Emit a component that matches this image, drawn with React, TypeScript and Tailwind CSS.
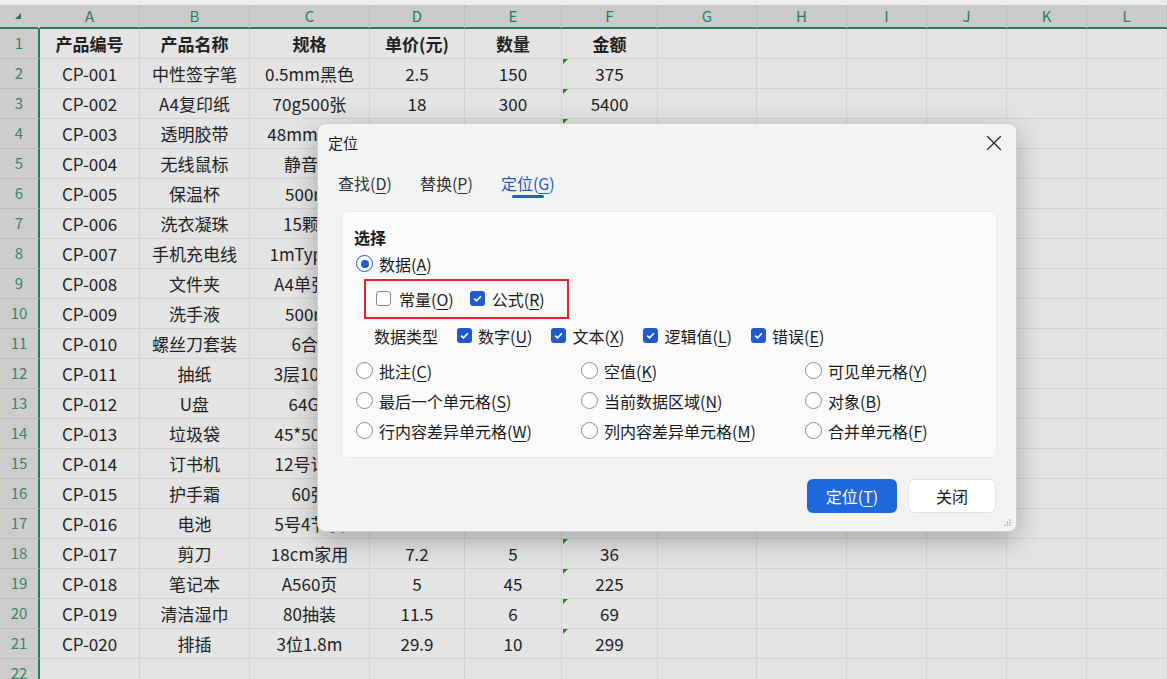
import { X } from "lucide-react";

const letters = ["A", "B", "C", "D", "E", "F", "G", "H", "I", "J", "K", "L"];

const rows = [
  ["产品编号", "产品名称", "规格", "单价(元)", "数量", "金额"],
  ["CP-001", "中性签字笔", "0.5mm黑色", "2.5", "150", "375"],
  ["CP-002", "A4复印纸", "70g500张", "18", "300", "5400"],
  ["CP-003", "透明胶带", "48mm透明", "3.5", "40", "140"],
  ["CP-004", "无线鼠标", "静音款", "59", "12", "708"],
  ["CP-005", "保温杯", "500ml", "45", "20", "900"],
  ["CP-006", "洗衣凝珠", "15颗装", "19.9", "30", "597"],
  ["CP-007", "手机充电线", "1mType-C", "15", "50", "750"],
  ["CP-008", "文件夹", "A4单张装", "6", "100", "600"],
  ["CP-009", "洗手液", "500ml", "12.8", "24", "307.2"],
  ["CP-010", "螺丝刀套装", "6合1", "35", "8", "280"],
  ["CP-011", "抽纸", "3层100抽", "2", "200", "400"],
  ["CP-012", "U盘", "64GB", "39", "15", "585"],
  ["CP-013", "垃圾袋", "45*50cm", "8.5", "60", "510"],
  ["CP-014", "订书机", "12号订针", "16", "10", "160"],
  ["CP-015", "护手霜", "60张", "22", "18", "396"],
  ["CP-016", "电池", "5号4节装", "9.9", "40", "396"],
  ["CP-017", "剪刀", "18cm家用", "7.2", "5", "36"],
  ["CP-018", "笔记本", "A560页", "5", "45", "225"],
  ["CP-019", "清洁湿巾", "80抽装", "11.5", "6", "69"],
  ["CP-020", "排插", "3位1.8m", "29.9", "10", "299"],
  ["", "", "", "", "", ""],
];

// "查找(D)" -> 查找( D underlined )
function Label({ text }: { text: string }) {
  const m = text.match(/^(.*)\((.)\)$/);
  if (!m) return <span>{text}</span>;
  return (
    <span>
      {m[1]}(<span className="underline underline-offset-[3px]">{m[2]}</span>)
    </span>
  );
}

function Check({ on }: { on: boolean }) {
  return on ? (
    <span className="flex size-[15px] items-center justify-center rounded-[3px] bg-[#1f5bcc]">
      <svg width="11" height="11" viewBox="0 0 11 11">
        <path d="M2.2 5.6 4.5 7.8 8.9 3.2" stroke="white" strokeWidth="1.6" fill="none" />
      </svg>
    </span>
  ) : (
    <span className="size-[15px] rounded-[3px] border border-[#8a8a8a] bg-white" />
  );
}

function Radio({ on }: { on?: boolean }) {
  return on ? (
    <span className="flex size-[17px] items-center justify-center rounded-full border-[1.5px] border-[#1f5bcc] bg-white">
      <span className="size-[8px] rounded-full bg-[#1f5bcc]" />
    </span>
  ) : (
    <span className="size-[17px] rounded-full border border-[#8c8c8c] bg-white" />
  );
}

const radios = [
  "批注(C)",
  "空值(K)",
  "可见单元格(Y)",
  "最后一个单元格(S)",
  "当前数据区域(N)",
  "对象(B)",
  "行内容差异单元格(W)",
  "列内容差异单元格(M)",
  "合并单元格(F)",
];

const types = ["数字(U)", "文本(X)", "逻辑值(L)", "错误(E)"];

function Dialog() {
  return (
    <div className="absolute left-[317px] top-[123px] flex h-[409px] w-[700px] flex-col rounded-lg border border-[#cfcfcf] bg-[#f3f3f3] text-[#1a1a1a] shadow-[0_8px_28px_rgba(0,0,0,0.28)]">
      <div className="flex h-[38px] items-center justify-between pl-[10px] pr-[9px]">
        <span className="text-[15px]">定位</span>
        <X size={26} strokeWidth={1.1} className="text-[#222]" />
      </div>

      <div className="flex items-start gap-[28px] pl-[20px] pt-[10px] text-[16px] leading-[22px]">
        <span className="text-[#333]">
          <Label text="查找(D)" />
        </span>
        <span className="text-[#333]">
          <Label text="替换(P)" />
        </span>
        <span className="flex flex-col items-center text-[#1f57c3]">
          <Label text="定位(G)" />
          <span className="mt-[1px] h-[2.5px] w-[32px] rounded-full bg-[#2a5cbd]" />
        </span>
      </div>

      <div className="ml-[23px] mt-[13px] flex h-[247px] w-[656px] flex-col rounded-md border border-[#ebebeb] bg-[#fafafa] pl-[12px] pt-[14px] text-[16px]">
        <div className="flex h-[22px] items-center font-bold">选择</div>
        <div className="ml-[2px] mt-[5px] flex h-[22px] items-center gap-[6px]">
          <Radio on />
          <Label text="数据(A)" />
        </div>
        <div className="ml-[10px] mt-[4px] flex h-[40px] w-[205px] items-center border-2 border-[#e3262b] pl-[10px]">
          <Check on={false} />
          <span className="ml-[8px]">
            <Label text="常量(O)" />
          </span>
          <span className="ml-[16px]">
            <Check on />
          </span>
          <span className="ml-[7px]">
            <Label text="公式(R)" />
          </span>
        </div>
        <div className="ml-[20px] mt-[6px] flex h-[22px] items-center">
          <span className="mr-[19px]">数据类型</span>
          {types.map((t) => (
            <span key={t} className="mr-[19px] flex items-center gap-[6px]">
              <Check on />
              <Label text={t} />
            </span>
          ))}
        </div>
        <div className="ml-[2px] mt-[9px] grid grid-cols-[225px_224px_auto]">
          {radios.map((r) => (
            <div key={r} className="flex h-[30px] items-center gap-[6px]">
              <Radio />
              <Label text={r} />
            </div>
          ))}
        </div>
      </div>

      <div className="mt-[21px] flex justify-end gap-[11px] pr-[20px] text-[16px]">
        <button className="flex h-[34px] w-[90px] items-center justify-center rounded-md bg-[#1f68de] text-white">
          <Label text="定位(T)" />
        </button>
        <button className="flex h-[34px] w-[88px] items-center justify-center rounded-md border border-[#e2e2e2] bg-white">
          关闭
        </button>
      </div>

      <svg className="absolute bottom-[5px] right-[5px]" width="8" height="8" viewBox="0 0 8 8">
        <circle cx="7" cy="2" r="0.8" fill="#999" />
        <circle cx="4.5" cy="4.5" r="0.8" fill="#999" />
        <circle cx="7" cy="4.5" r="0.8" fill="#999" />
        <circle cx="2" cy="7" r="0.8" fill="#999" />
        <circle cx="4.5" cy="7" r="0.8" fill="#999" />
        <circle cx="7" cy="7" r="0.8" fill="#999" />
      </svg>
    </div>
  );
}

export default function App() {
  const grid =
    "grid grid-cols-[40px_100px_110px_120px_95px_97px_96px_99px_90px_80px_80px_80px_80px]";
  return (
    <div className="relative h-[679px] w-[1167px] overflow-hidden bg-[#e4e4e4] font-['Noto_Sans_CJK_SC',sans-serif]">
      <div className="h-[5px] bg-[#ededed]" />
      {/* column header */}
      <div className={`${grid} h-[24px] border-b-2 border-[#2a7a5c] bg-[#cbcbcb]`}>
        <div className="relative border-r-2 border-[#cbcbcb]">
          <svg className="absolute left-[15px] top-[8px]" width="6" height="6" viewBox="0 0 6 6">
            <path d="M6 0V6H0Z" fill="#3f6f5c" />
          </svg>
        </div>
        {letters.map((l) => (
          <div
            key={l}
            className="flex items-center justify-center border-r border-[#bdbdbd] text-[15px] text-[#2e7a5e]"
          >
            {l}
          </div>
        ))}
      </div>

      {rows.map((r, i) => (
        <div key={i} className={`${grid} h-[30px]`}>
          <div className="flex items-center justify-center border-b border-r-2 border-b-[#bcbcbc] border-r-[#2a7a5c] bg-[#cdcdcd] text-[15px] text-[#3a8468]">
            {i + 1}
          </div>
          {r.map((c, j) => (
            <div
              key={j}
              className={`relative flex items-center justify-center overflow-hidden whitespace-nowrap border-b border-r border-[#d3d3d3] text-[17px] text-[#222] ${
                i === 0 ? "font-bold" : ""
              }`}
            >
              {j === 5 && i > 0 && i < 21 && (
                <span className="absolute left-[1px] top-0 h-0 w-0 border-r-[5px] border-t-[5px] border-r-transparent border-t-[#1f8a1f]" />
              )}
              {c}
            </div>
          ))}
          {Array.from({ length: 6 }).map((_, k) => (
            <div key={"e" + k} className="border-b border-r border-[#d3d3d3]" />
          ))}
        </div>
      ))}

      <Dialog />
    </div>
  );
}
